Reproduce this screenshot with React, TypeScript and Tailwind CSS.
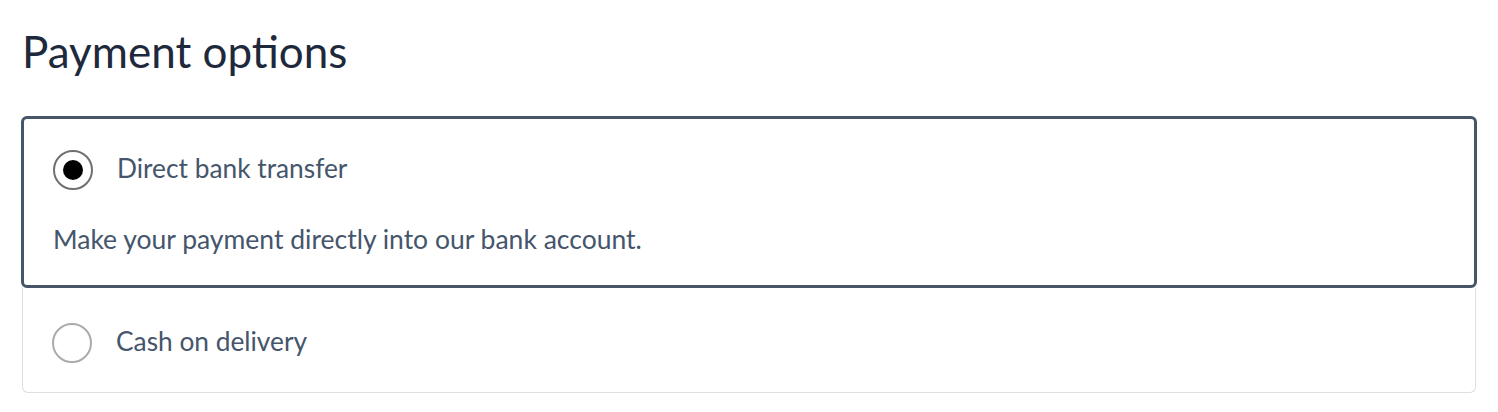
import React, { useState } from "react";

type Option = {
  id: string;
  label: string;
  description?: string;
};

const options: Option[] = [
  {
    id: "bacs",
    label: "Direct bank transfer",
    description: "Make your payment directly into our bank account.",
  },
  { id: "cod", label: "Cash on delivery" },
];

const Radio: React.FC<{ checked: boolean }> = ({ checked }) => (
  <span
    className={`flex h-[40px] w-[40px] shrink-0 items-center justify-center rounded-full border-2 ${
      checked ? "border-[#707070]" : "border-[#ababab]"
    }`}
  >
    {checked && <span className="h-[20px] w-[20px] rounded-full bg-black" />}
  </span>
);

const App: React.FC = () => {
  const [selected, setSelected] = useState("bacs");

  return (
    <div
      className="w-full bg-white px-[21px] pt-[21px]"
      style={{ fontFamily: "Lato, 'Noto Sans', sans-serif" }}
    >
      <h2 className="pl-px text-[44px] leading-[60px] text-[#1e293b]">Payment options</h2>
      <div className="mt-[35px] flex flex-col">
        {options.map((opt) => {
          const isSel = opt.id === selected;
          return (
            <div
              key={opt.id}
              onClick={() => setSelected(opt.id)}
              className={
                isSel
                  ? "cursor-pointer rounded-md border-[3px] border-[#475569] pl-[29px] pr-6 pt-[31px] pb-[28px]"
                  : "mx-px cursor-pointer rounded-b-md border-x border-b border-[#dcdfe4] pl-[29px] pr-6 pt-[35px] pb-[29px]"
              }
            >
              <div className="flex items-center gap-[24px]">
                <Radio checked={isSel} />
                <span className="pb-[4px] text-[26.3px] leading-[36px] text-[#45556b]">
                  {opt.label}
                </span>
              </div>
              {isSel && opt.description && (
                <p className="mt-[31px] text-[26.5px] leading-[36px] text-[#45556b]">
                  {opt.description}
                </p>
              )}
            </div>
          );
        })}
      </div>
    </div>
  );
};

export default App;
